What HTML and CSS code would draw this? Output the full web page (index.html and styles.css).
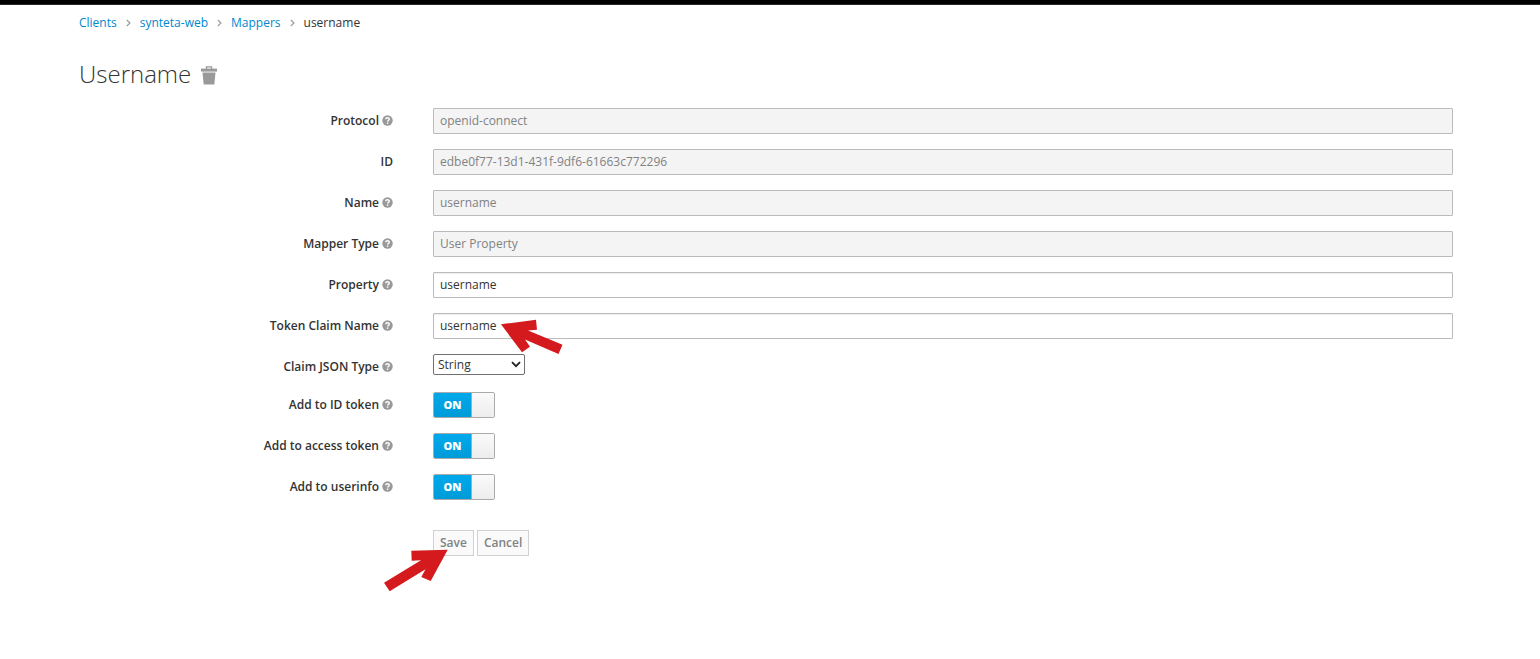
FILE: index.html
```html
<!DOCTYPE html>
<html lang="en">
<head>
<meta charset="utf-8">
<meta name="viewport" content="width=device-width, initial-scale=1">
<title>Username mapper</title>
<link rel="stylesheet" href="styles.css">
</head>
<body>
<svg class="sprite" aria-hidden="true">
  <symbol id="help" viewBox="0 0 11 11">
    <circle cx="5.5" cy="5.5" r="5.2" fill="#999"/>
    <path d="M3.7 4.3C3.8 2.3 7.3 2.3 7.3 4.2 7.3 5.3 5.6 5.4 5.6 6.6" fill="none" stroke="#fff" stroke-width="1.4"/>
    <rect x="4.8" y="7.4" width="1.5" height="1.4" fill="#fff"/>
  </symbol>
  <symbol id="angle" viewBox="0 0 5 8">
    <path d="M.8 1 4 4 .8 7" fill="none" stroke="#999" stroke-width="1.1"/>
  </symbol>
</svg>
<header class="topbar"></header>
<main class="content">
  <nav aria-label="Breadcrumb">
    <ol class="breadcrumb">
      <li><a href="#clients">Clients</a></li>
      <li><svg class="angle"><use href="#angle"/></svg><a href="#client">synteta-web</a></li>
      <li><svg class="angle"><use href="#angle"/></svg><a href="#mappers">Mappers</a></li>
      <li><svg class="angle"><use href="#angle"/></svg>username</li>
    </ol>
  </nav>
  <div class="title">
    <h1>Username</h1>
    <button class="trash" type="button" aria-label="Delete mapper">
      <svg viewBox="0 0 16 19" width="16" height="19">
        <path d="M5.5 3V.9h5V3" fill="none" stroke="#999" stroke-width="1.4"/>
        <path d="M0 2.6h16v3H0z" fill="#999"/>
        <path d="M1.5 6.6h13L13.3 18.4H2.7z" fill="#999"/>
      </svg>
    </button>
  </div>
  <form class="form">
    <div class="row">
      <label class="label" for="protocol">Protocol <svg class="help"><use href="#help"/></svg></label>
      <input class="text" id="protocol" type="text" value="openid-connect" disabled>
    </div>
    <div class="row">
      <label class="label" for="id">ID</label>
      <input class="text" id="id" type="text" value="edbe0f77-13d1-431f-9df6-61663c772296" disabled>
    </div>
    <div class="row">
      <label class="label" for="name">Name <svg class="help"><use href="#help"/></svg></label>
      <input class="text" id="name" type="text" value="username" disabled>
    </div>
    <div class="row">
      <label class="label" for="mapper">Mapper Type <svg class="help"><use href="#help"/></svg></label>
      <input class="text" id="mapper" type="text" value="User Property" disabled>
    </div>
    <div class="row">
      <label class="label" for="property">Property <svg class="help"><use href="#help"/></svg></label>
      <input class="text" id="property" type="text" value="username">
    </div>
    <div class="row">
      <label class="label" for="claim">Token Claim Name <svg class="help"><use href="#help"/></svg></label>
      <div class="field">
        <input class="text" id="claim" type="text" value="username">
        <svg class="arrow arrow-claim" viewBox="0 0 62 36" aria-hidden="true">
          <path d="M0 5.3 35 .7 36 10.7 27 11.5 61.5 25.7 57.5 35 24 20.5 29 27.7 21 33.3z"/>
        </svg>
      </div>
    </div>
    <div class="row">
      <label class="label" for="json">Claim JSON Type <svg class="help"><use href="#help"/></svg></label>
      <div class="field">
        <select class="select" id="json"><option>String</option><option>long</option><option>int</option><option>boolean</option></select>
        <svg class="caret" viewBox="0 0 10 7" aria-hidden="true"><path d="M1 1.2 5 5.2 9 1.2" fill="none" stroke="#222" stroke-width="1.8"/></svg>
      </div>
    </div>
    <div class="row">
      <label class="label" for="idtoken">Add to ID token <svg class="help"><use href="#help"/></svg></label>
      <label class="toggle"><input id="idtoken" type="checkbox" checked><span class="on">ON</span><span class="knob"></span></label>
    </div>
    <div class="row">
      <label class="label" for="access">Add to access token <svg class="help"><use href="#help"/></svg></label>
      <label class="toggle"><input id="access" type="checkbox" checked><span class="on">ON</span><span class="knob"></span></label>
    </div>
    <div class="row">
      <label class="label" for="userinfo">Add to userinfo <svg class="help"><use href="#help"/></svg></label>
      <label class="toggle"><input id="userinfo" type="checkbox" checked><span class="on">ON</span><span class="knob"></span></label>
    </div>
    <div class="row actions">
      <div class="buttons">
        <button class="btn" type="submit" disabled>Save</button>
        <button class="btn" type="button" disabled>Cancel</button>
        <svg class="arrow arrow-save" viewBox="0 0 64 43" aria-hidden="true">
          <path d="M63.7.7 27.3 1.7 27.7 11.7 37 11.2 0 33.7 5.7 42.3 41.5 20.3 37.3 28 46.7 32z"/>
        </svg>
      </div>
    </div>
  </form>
</main>
</body>
</html>
```
FILE: styles.css
```css
* { box-sizing: border-box; }
body {
  margin: 0;
  background: #fff;
  color: #333;
  font: 12px/18px "Open Sans", sans-serif;
}
.sprite { position: absolute; width: 0; height: 0; }
.topbar { height: 5px; background: #000; border-bottom: 1px solid #292929; }
.content { padding: 9px 87px 40px 79px; }
.breadcrumb { display: flex; margin: 0; padding: 0; list-style: none; }
.breadcrumb a { color: #0088ce; text-decoration: none; }
.angle { width: 5px; height: 8px; margin: 0 9px; }
.title { display: flex; align-items: center; gap: 10px; margin-top: 28px; }
.title h1 { margin: 0; padding-bottom: 2px; font-size: 24px; font-weight: 300; line-height: 28px; }
.trash { display: flex; padding: 0; border: 0; background: none; }
.form { display: grid; gap: 15px; margin-top: 18px; }
.row {
  display: grid;
  grid-template-columns: 314px minmax(0, 1fr);
  column-gap: 40px;
  align-items: start;
}
.label {
  display: flex;
  align-items: center;
  justify-content: flex-end;
  gap: 3px;
  padding: 4px 0 1px;
  font-weight: 600;
}
.help { width: 11px; height: 11px; margin-bottom: 1px; }
.field { position: relative; display: flex; }
.text {
  width: 100%;
  height: 26px;
  padding: 0 6px 2px;
  border: 1px solid #bbb;
  border-radius: 1px;
  background: #fff;
  color: #333;
  font: inherit;
  box-shadow: inset 0 1px 1px rgba(0, 0, 0, .07);
}
.text:disabled { background: #f4f4f4; color: #808284; box-shadow: none; }
.select {
  appearance: none;
  width: 92px;
  height: 21px;
  padding: 0 4px;
  border: 1px solid #707070;
  border-radius: 2px;
  background: #fff;
  color: #333;
  font: inherit;
}
.caret { position: absolute; top: 7px; left: 78px; width: 10px; height: 7px; pointer-events: none; }
.arrow { position: absolute; fill: #d41a1c; pointer-events: none; }
.arrow-claim { top: 6px; left: 68px; width: 62px; height: 36px; }
.arrow-save { top: 19px; left: -49px; width: 64px; height: 43px; }
.toggle {
  position: relative;
  display: flex;
  width: 62px;
  height: 26px;
  border: 1px solid #aaa;
  border-radius: 2px;
  overflow: hidden;
}
.toggle input { position: absolute; inset: 0; margin: 0; opacity: 0; }
.on {
  flex: 1;
  background: linear-gradient(#00a9ec, #009bd8);
  color: #fff;
  font-size: 11px;
  font-weight: 800;
  line-height: 24px;
  text-align: center;
}
.knob { width: 23px; border-left: 1px solid #aaa; background: linear-gradient(#fafafa, #ededed); }
.actions { margin-top: 15px; }
.buttons { position: relative; grid-column: 2; display: flex; gap: 3px; }
.btn {
  height: 26px;
  padding: 0 6px;
  border: 1px solid #d1d1d1;
  background: #fafafa;
  color: #808284;
  font: inherit;
  font-weight: 600;
}
```
